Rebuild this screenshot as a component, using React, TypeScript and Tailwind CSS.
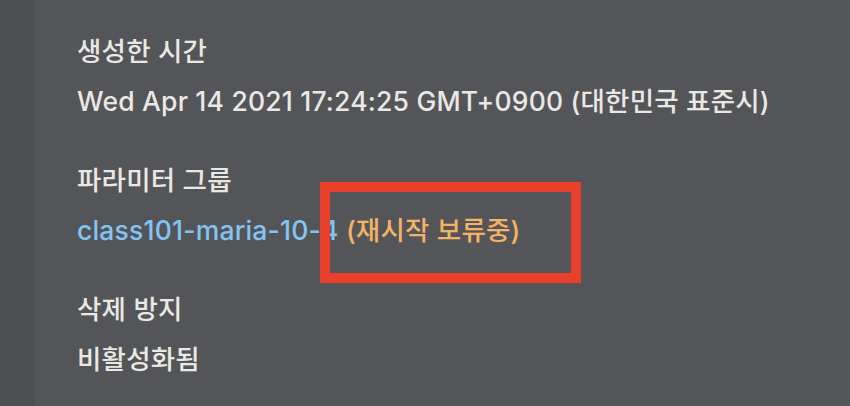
export default function App() {
  return (
    <div
      className="relative flex h-[406px] w-[850px] overflow-hidden bg-[#545558]"
      style={{ fontFamily: 'Inter, "Noto Sans CJK KR", sans-serif' }}
    >
      {/* 왼쪽 어두운 띠 */}
      <div className="w-[35px] shrink-0 bg-[#4f5053]" />

      <div className="flex flex-col gap-[29px] pl-[42px] pt-[26px] text-[26.5px] font-medium leading-[50px] tracking-[0.2px] text-[#eae8e4]">
        <div>
          <div>생성한 시간</div>
          <div>Wed Apr 14 2021 17:24:25 GMT+0900 (대한민국 표준시)</div>
        </div>
        <div>
          <div>파라미터 그룹</div>
          <div>
            <span className="text-[#84c4f2]">class101-maria-10-4</span>{" "}
            <span className="text-[#f3b266]">(재시작 보류중)</span>
          </div>
        </div>
        <div>
          <div>삭제 방지</div>
          <div>비활성화됨</div>
        </div>
      </div>

      {/* 강조 표시 박스 */}
      <div className="absolute left-[320px] top-[182px] h-[101px] w-[261px] border-[10px] border-[#e8402a]" />
    </div>
  );
}
